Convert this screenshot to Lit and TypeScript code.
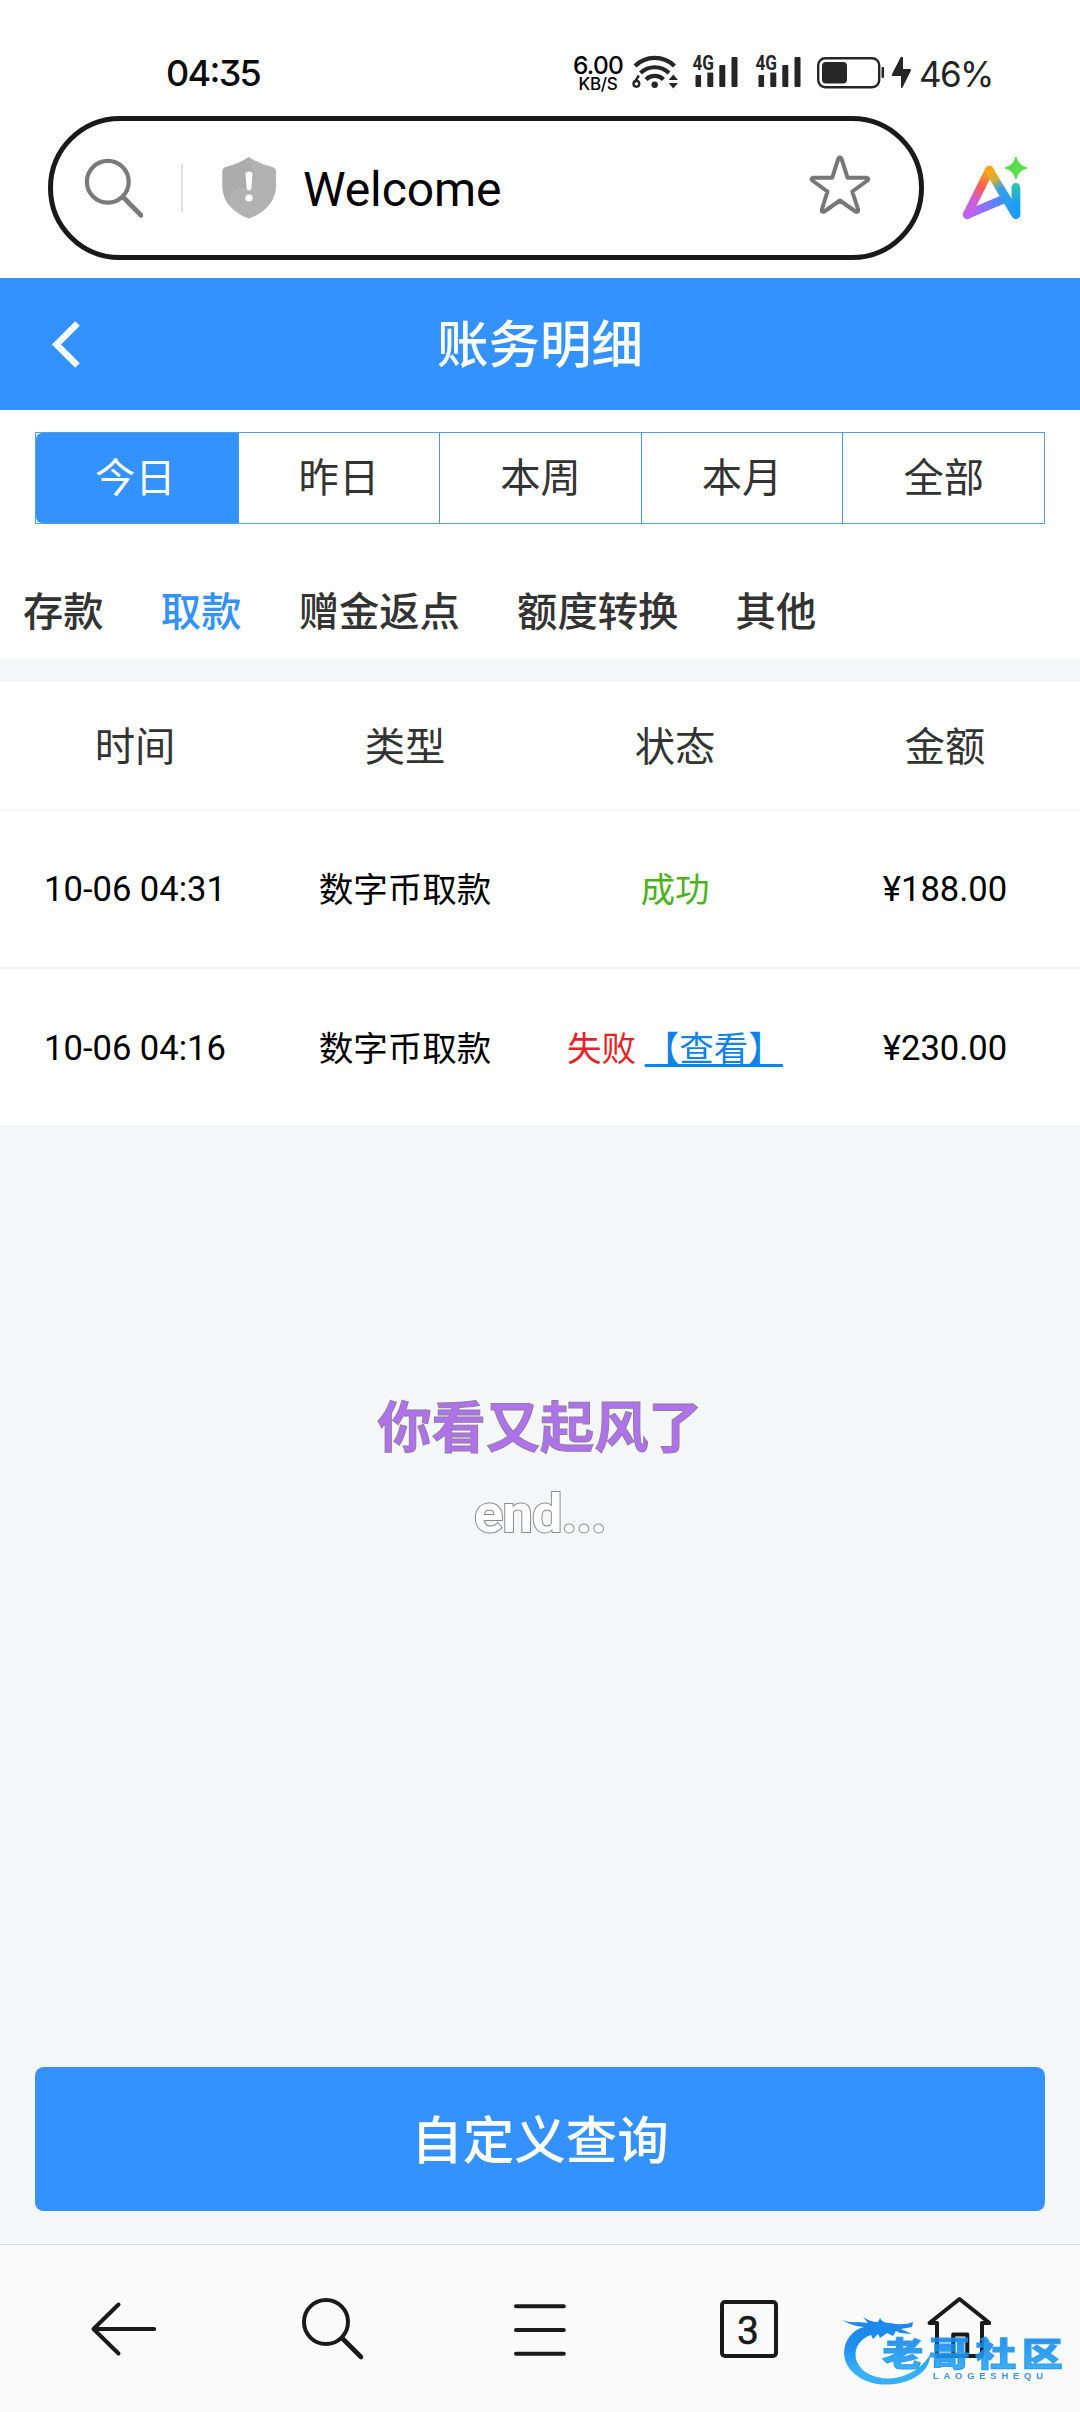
import { LitElement, html, css } from "lit";
import { customElement, property, state } from "lit/decorators.js";
import { classMap } from "lit/directives/class-map.js";

interface Entry {
  time: string;
  kind: string;
  ok: boolean;
  amount: string;
}

@customElement("status-bar")
class StatusBar extends LitElement {
  static styles = css`
    :host { display: block; height: 116px; }
    .bar {
      display: flex; align-items: center; box-sizing: border-box;
      height: 116px; padding: 28px 80px 0 166px;
      font-family: Inter, Roboto, sans-serif; color: #0c0c0c;
      font-feature-settings: "cv09" 1, "calt" 1;
    }
    .time { font-size: 36px; font-weight: 500; letter-spacing: -1.7px; line-height: 44px; width: 407px; white-space: nowrap; padding-top: 2px; box-sizing: border-box; flex: none; }
    .speed { width: 50px; display: flex; flex-direction: column; align-items: center; font-weight: 500; margin-right: 9px; white-space: nowrap; padding-top: 3px; flex: none; color: #000; }
    .rate { font-size: 24.500px; line-height: 20px; letter-spacing: -0.700px; }
    .unit { font-size: 17px; line-height: 18px; letter-spacing: -0.300px; }
    svg { display: block; flex: none; }
    .wifi { margin-right: 12px; }
    .sig { margin-right: 15px; }
    .sig2 { margin-right: 14px; }
    .batt { margin-right: 6px; }
    .bolt { margin-right: 7px; }
    .pct { font-size: 35px; letter-spacing: -1.600px; line-height: 44px; color: #242424; padding-top: 4px; white-space: nowrap; }
    .g { font: 700 20px Roboto, sans-serif; }
  `;

  private signal(cls: string) {
    return html`<svg class=${cls} width="48" height="50" viewBox="692 47 48 50" fill="#262626">
      <text class="g" x="692.500" y="70" textLength="21.500" lengthAdjust="spacingAndGlyphs">4G</text>
      <rect x="695.500" y="75" width="5.600" height="12" rx="1" />
      <rect x="707.300" y="72.500" width="6" height="14.500" rx="1" />
      <rect x="719.300" y="65" width="6" height="22" rx="1" />
      <rect x="731.500" y="57" width="6" height="30" rx="1" />
    </svg>`;
  }

  render() {
    return html`<div class="bar">
      <span class="time">04:35</span>
      <span class="speed"><span class="rate">6.00</span><span class="unit">KB/S</span></span>
      <svg class="wifi" width="48" height="34" viewBox="632 54.500 48 34" fill="none" stroke="#262626">
        <path d="M635 65.500a28 28 0 0 1 39.500 0M640.500 72.500a20.500 20.500 0 0 1 28.500 0M646 79a12.500 12.500 0 0 1 17.500 0" stroke-width="4.200" />
        <circle cx="654.700" cy="84.300" r="3.200" fill="#262626" stroke="none" />
        <path d="M638.800 75L634.800 81.500" stroke-width="2.400" />
        <circle cx="636.400" cy="83.300" r="2.900" stroke-width="2.400" />
        <path d="M673.300 74l4.700 5.500h-9.400zM673.300 88l4.700-5.500h-9.400z" fill="#262626" stroke="none" />
      </svg>
      ${this.signal("sig")}${this.signal("sig2")}
      <svg class="batt" width="68" height="34" viewBox="817 55 68 34" fill="none" stroke="#262626">
        <rect x="818.200" y="58.200" width="61" height="29" rx="7" stroke-width="2.400" />
        <rect x="822" y="62" width="25" height="21.500" rx="4" fill="#262626" stroke="none" />
        <rect x="881.500" y="67" width="2.600" height="11" rx="1.200" fill="#262626" stroke="none" />
      </svg>
      <svg class="bolt" width="21" height="34" viewBox="891 55 21 34" fill="#262626">
        <path d="M900.500 57.500L891.800 74.500Q891.500 76 893 76H901V87.500Q901.500 88.500 902.500 87.500L911 70.500Q911.300 69 910 69H903V57.500Q901.500 56 900.500 57.500z" />
      </svg>
      <span class="pct">46%</span>
    </div>`;
  }
}

@customElement("address-bar")
class AddressBar extends LitElement {
  static styles = css`
    :host { display: block; }
    .row { display: flex; align-items: center; padding: 0 0 18px 48px; height: 144px; }
    .pill {
      display: flex; align-items: center; box-sizing: border-box;
      width: 876px; height: 144px; padding: 0 48px 0 31px;
      border: 5px solid #1a1a1a; border-radius: 72px;
    }
    svg { display: block; flex: none; }
    .search { margin-right: 38px; }
    .sep { width: 2px; height: 48px; background: #e0e0e0; margin-right: 38px; }
    .shield { margin-right: 26px; }
    .title { flex: 1; font: 400 48px/60px Roboto, sans-serif; letter-spacing: -0.100px; color: #000; padding-top: 3px; }
    .star { margin-bottom: 7px; }
    .ai { margin-left: 38px; }
  `;
  render() {
    return html`<div class="row">
      <div class="pill">
        <svg class="search" width="59" height="60" viewBox="84 158 59 60" fill="none" stroke="#7a7a7a" stroke-width="4.200" stroke-linecap="round">
          <circle cx="107.800" cy="181.700" r="20.900" />
          <path d="M123 197L141 215.200" stroke-width="4.800" />
        </svg>
        <span class="sep"></span>
        <svg class="shield" width="56" height="64" viewBox="221 156 56 64">
          <path d="M249 157Q260 164.500 272.500 167Q276 168 276 171.500V186C276 201 265 213 249 218.500C233 213 222.500 201 222.500 186V171.500Q222.500 168 226 167Q238 164.500 249 157z" fill="#b2b2b2" />
          <path d="M249 157Q238 164.500 226 167Q222.500 168 222.500 171.500V186C222.500 196 227 203 231 207C227 197 233 188 242 188H249V180H257Q250 166 249 157z" fill="#acacac" />
          <path d="M245.500 174Q245.500 171.500 249 171.500T252.500 174L251.300 188Q251 190.500 249 190.500T246.700 188z" fill="#fff" />
          <circle cx="249" cy="198" r="3.600" fill="#fff" />
        </svg>
        <span class="title">Welcome</span>
        <svg class="star" width="63" height="62" viewBox="808 153.500 63 62" fill="none" stroke="#777" stroke-width="4" stroke-linejoin="round">
          <path d="M838.300 158.200Q839.900 155.200 841.500 158.200L847.500 177.200H866.500Q869.500 178 867.500 180L852.300 191L858.300 209.500Q858.300 212 855.500 211L839.900 200L824.300 211Q821.500 212 821.700 209.500L827.500 191L812.300 180Q810.300 178 813.300 177.200H832.300z" />
        </svg>
      </div>
      <svg class="ai" width="66" height="66" viewBox="962 155 66 66" fill="none">
        <defs>
          <linearGradient id="left" x1="989" y1="166" x2="967" y2="217" gradientUnits="userSpaceOnUse">
            <stop offset="0.100" stop-color="#fda61a" /><stop offset="0.400" stop-color="#fb5d55" /><stop offset="0.650" stop-color="#cf5ed0" /><stop offset="1" stop-color="#bd62fa" />
          </linearGradient>
          <linearGradient id="base" x1="967" y1="217" x2="1003" y2="204" gradientUnits="userSpaceOnUse">
            <stop offset="0.100" stop-color="#bf60fa" /><stop offset="1" stop-color="#4d87fd" />
          </linearGradient>
          <linearGradient id="right" x1="989" y1="170" x2="1014" y2="216" gradientUnits="userSpaceOnUse">
            <stop offset="0" stop-color="#fda61a" /><stop offset="0.220" stop-color="#cdb23c" /><stop offset="0.420" stop-color="#359fe8" /><stop offset="1" stop-color="#229bff" />
          </linearGradient>
          <linearGradient id="stem" x1="1016" y1="186" x2="1016" y2="218" gradientUnits="userSpaceOnUse">
            <stop offset="0" stop-color="#2cc3b0" /><stop offset="0.600" stop-color="#1b9cff" />
          </linearGradient>
        </defs>
        <g stroke-width="8.800" stroke-linecap="round" stroke-linejoin="round">
          <path d="M967.300 214.500L1004 199" stroke="url(#base)" />
          <path d="M989.300 170.200L967.300 214.500" stroke="url(#left)" />
          <path d="M989.300 170.200L1015.800 214.500" stroke="url(#right)" />
          <path d="M1015.900 187.500L1016 214.500" stroke="url(#stem)" />
        </g>
        <path d="M1015.900 157Q1018.300 165.700 1027 168Q1018.300 170.300 1015.900 179Q1013.500 170.300 1005 168Q1013.500 165.700 1015.900 157z" fill="#5bdc4c" stroke="#5bdc4c" stroke-linejoin="round" />
      </svg>
    </div>`;
  }
}

@customElement("nav-bar")
class NavBar extends LitElement {
  static styles = css`
    :host { display: block; }
    .nav {
      position: relative; display: grid; grid-template-columns: 248px 167px 250px 167px 248px;
      align-items: center; justify-items: center; box-sizing: border-box;
      height: 168px; background: #fafafa; border-top: 1px solid #d6d8da;
    }
    svg { display: block; }
    .line { fill: none; stroke: #1a1a1a; stroke-width: 4; stroke-linecap: round; stroke-linejoin: round; }
    .count { font: 400 39px Roboto, sans-serif; fill: #1a1a1a; stroke: #1a1a1a; stroke-width: 0.500px; }
    .mark { position: absolute; left: 838px; top: 68px; filter: blur(0.500px); }
    .name { font: 900 32.500px "Noto Sans CJK SC", sans-serif; stroke: #1c94ee; stroke-width: 1.200px; }
    .latin { font: 700 9.500px "Liberation Sans", sans-serif; }
  `;
  render() {
    return html`<nav class="nav">
      <svg class="line" width="70" height="70" viewBox="89 2294 70 70"><path d="M118.500 2304.500L93.500 2329L118.500 2353.500M94 2329H154.200" /></svg>
      <svg class="line" width="70" height="70" viewBox="297 2294 70 70"><circle cx="326" cy="2322" r="22" /><path d="M342 2338L361 2357" stroke-width="4.600" /></svg>
      <svg class="line" width="70" height="70" viewBox="505 2294 70 70"><path d="M516 2306.200H563.800M516 2330H563.800M516 2353.800H563.800" /></svg>
      <svg class="line" width="70" height="70" viewBox="714 2294 70 70"><rect x="722" y="2302" width="54" height="54" rx="3" /><text class="count" x="748" y="2343.500" text-anchor="middle">3</text></svg>
      <svg class="line" width="70" height="70" viewBox="921 2294 70 70"><path d="M937 2356V2323H929.500L959.500 2299L989.500 2323H982V2356zM953.200 2356V2334.500H967.300V2356" /></svg>
      <svg class="mark" width="234" height="80" viewBox="838 2313 234 80">
        <defs>
          <linearGradient id="sea" x1="0" y1="2318" x2="0" y2="2385" gradientUnits="userSpaceOnUse">
            <stop offset="0" stop-color="#0f80e6" /><stop offset="0.400" stop-color="#1488ec" /><stop offset="0.850" stop-color="#2bb0f8" /><stop offset="1" stop-color="#2aa8f4" />
          </linearGradient>
          <linearGradient id="ink" x1="0" y1="-28" x2="0" y2="3" gradientUnits="userSpaceOnUse">
            <stop offset="0" stop-color="#1483e8" /><stop offset="1" stop-color="#27a8f5" />
          </linearGradient>
        </defs>
        <path d="M842 2320Q850 2323 858 2322L868 2323L863 2317Q870 2322 878 2322L880 2318Q882 2323 890 2323Q904 2326 913 2322L912 2327L901 2329L912 2334L900 2333L896 2331L893 2336L887 2333L880 2338L878 2334L873 2339L871 2335C857 2340 853 2352 857 2362C864 2378 889 2383 908 2374Q922 2368 930 2355Q930 2370 912 2379C886 2391 853 2383 845 2360C841 2344 851 2330 864 2327Q852 2326 842 2320z" fill="url(#sea)" fill-opacity="0.950" />
        <text class="name" transform="translate(882.500 2365.500) scale(1.250 1)" x="0 37.200 74.400 111.600" y="0" fill="url(#ink)" opacity="0.900">老哥社区</text>
        <text class="latin" x="933" y="2378.500" fill="#3f93d8" textLength="110" lengthAdjust="spacing">LAOGESHEQU</text>
      </svg>
    </nav>`;
  }
}

@customElement("app-root")
class AppRoot extends LitElement {
  static styles = css`
    :host {
      display: flex; flex-direction: column; height: 2412px; width: 1080px; overflow: hidden; background: #fff;
      font-family: Roboto, "Noto Sans CJK SC", sans-serif; font-size: 40.320px; color: #333;
    }
    .head {
      display: grid; grid-template-columns: 130px 1fr 130px; align-items: center;
      height: 132px; background: #3492ff; color: #fff; flex: none;
    }
    .back { display: block; margin-left: 50px; }
    .title { margin: 0; padding-top: 4px; text-align: center; font-size: 51.500px; font-weight: 500; line-height: 60px; }
    .days { display: grid; grid-template-columns: repeat(5, 1fr); margin: 22px 35px 0; height: 92px; box-sizing: border-box; border: 1px solid #5b9fe0; flex: none; }
    .day { display: flex; align-items: center; justify-content: center; border-left: 1px solid #4396ec; padding-bottom: 7px; }
    .day:first-child { border-left: 0; padding-right: 3px; }
    .day.on { background: #3492ff; color: #fff; border-radius: 6px 0 0 6px; }
    .kinds { display: flex; gap: 57.200px; height: 135px; box-sizing: border-box; padding: 43px 23px 0; line-height: 92px; font-weight: 500; flex: none; }
    .kind.on { color: #3492ff; }
    .gap { height: 23px; background: #f4f6f8; flex: none; }
    .grid { display: grid; grid-template-columns: repeat(4, 270px); align-items: center; justify-items: center; box-sizing: border-box; border-bottom: 2px solid #f3f4f6; white-space: nowrap; }
    .top { height: 129px; padding-bottom: 4px; }
    .item { height: 158px; font-size: 34.560px; color: #000; }
    .item + .item { padding-top: 2px; }
    .han { padding-bottom: 4px; }
    .good { color: #4bb31b; }
    .bad { color: #e22428; }
    .link { color: #1083e8; text-decoration: underline; text-decoration-thickness: 3px; text-underline-offset: 2.500px; text-decoration-skip-ink: none; }
    .body { flex: 1; display: flex; flex-direction: column; align-items: center; background: #f4f6f8; padding: 270px 35px 33px; font-weight: 700; font-size: 54.200px; }
    .song { line-height: 64px; color: #b071ec; -webkit-text-stroke: 1px #8d7f9a; }
    .end { line-height: 64px; margin-top: 21px; color: #fff; letter-spacing: -0.900px; -webkit-text-stroke: 2px #8a8a8a; paint-order: stroke fill; }
    .query {
      width: 100%; height: 144px; margin-top: auto; border: 0; border-radius: 8.640px; padding: 5px 0 0;
      background: #3492ff; color: #fff; font: 500 51.500px/60px Roboto, "Noto Sans CJK SC", sans-serif;
    }
  `;

  @property({ attribute: false }) entries: Entry[] = [
    { time: "10-06 04:31", kind: "数字币取款", ok: true, amount: "¥188.00" },
    { time: "10-06 04:16", kind: "数字币取款", ok: false, amount: "¥230.00" },
  ];
  @state() private day = "今日";
  @state() private kind = "取款";

  render() {
    return html`
      <status-bar></status-bar>
      <address-bar></address-bar>
      <header class="head">
        <svg class="back" width="32" height="48" viewBox="50 320.500 32 48" fill="none" stroke="#fff" stroke-width="6.500">
          <path d="M77.500 324L56.500 345L77.500 366" />
        </svg>
        <h1 class="title">账务明细</h1>
      </header>
      <div class="days">
        ${["今日", "昨日", "本周", "本月", "全部"].map(
          (d) => html`<span class=${classMap({ day: true, on: d === this.day })} @click=${() => (this.day = d)}>${d}</span>`
        )}
      </div>
      <div class="kinds">
        ${["存款", "取款", "赠金返点", "额度转换", "其他"].map(
          (k) => html`<span class=${classMap({ kind: true, on: k === this.kind })} @click=${() => (this.kind = k)}>${k}</span>`
        )}
      </div>
      <div class="gap"></div>
      <div class="grid top"><span>时间</span><span>类型</span><span>状态</span><span>金额</span></div>
      ${this.entries.map(
        (e) => html`<div class="grid item">
          <span>${e.time}</span><span class="han">${e.kind}</span>
          ${e.ok
            ? html`<span class="han good">成功</span>`
            : html`<span class="han"><span class="bad">失败</span> <span class="link">【查看】</span></span>`}
          <span>${e.amount}</span>
        </div>`
      )}
      <main class="body">
        <div class="song">你看又起风了</div>
        <div class="end">end...</div>
        <button class="query">自定义查询</button>
      </main>
      <nav-bar></nav-bar>
    `;
  }
}
